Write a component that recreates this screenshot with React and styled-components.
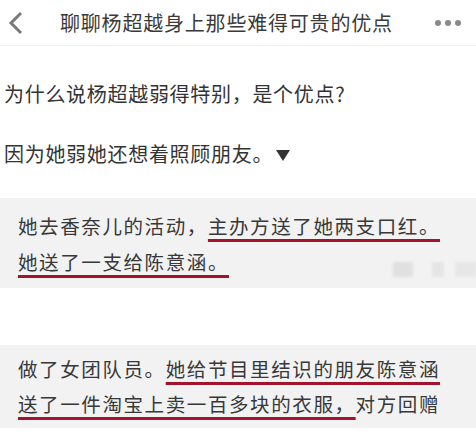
import React from "react";
import styled, { createGlobalStyle } from "styled-components";

const GlobalStyle = createGlobalStyle`
  html, body {
    margin: 0;
    padding: 0;
    background: #ffffff;
  }
  body {
    font-family: "Noto Sans CJK SC", "Noto Sans", sans-serif;
    color: #333333;
  }
`;

const Page = styled.div`
  width: 476px;
  height: 432px;
  overflow: hidden;
  background: #ffffff;
`;

const Header = styled.div`
  height: 45px;
  display: flex;
  align-items: center;
  border-bottom: 1px solid #f0f0f0;
`;

const BackButton = styled.div`
  width: 60px;
  height: 45px;
  display: flex;
  align-items: center;
  padding-left: 7px;
  box-sizing: border-box;
`;

const Title = styled.div`
  flex: 1;
  font-size: 20px;
  letter-spacing: 0.8px;
  color: #3a3a3a;
  line-height: 45px;
  white-space: nowrap;
`;

const MoreButton = styled.div`
  display: flex;
  gap: 4px;
  padding-right: 15px;
`;

const Dot = styled.span`
  width: 6px;
  height: 6px;
  border-radius: 50%;
  background: #8a8a8a;
`;

const Body = styled.div`
  padding: 33px 0 0 4px;
`;

const Para = styled.p`
  margin: 0 0 30px;
  font-size: 20px;
  letter-spacing: 0.7px;
  line-height: 30px;
  color: #333333;
  white-space: nowrap;
`;

const Arrow = styled.span`
  display: inline-block;
  margin-left: 3px;
  width: 0;
  height: 0;
  border-left: 7px solid transparent;
  border-right: 7px solid transparent;
  border-top: 11px solid #333333;
  vertical-align: 1px;
`;

const Quote = styled.div`
  position: relative;
  margin: ${(p) => p.$top}px 0 0 -4px;
  padding: ${(p) => p.$pt}px 18px ${(p) => p.$pb}px;
  background: #f2f2f2;
  font-size: 19.5px;
  letter-spacing: 1.6px;
  line-height: ${(p) => p.$lh}px;
  color: #383838;
  white-space: nowrap;
`;

const Mark = styled.span`
  text-decoration: underline;
  text-decoration-color: #a3142c;
  text-decoration-thickness: 2.5px;
  text-underline-offset: 5px;
`;

const Blur = styled.span`
  position: absolute;
  top: 64px;
  height: 15px;
  background: ${(p) => p.$c};
  filter: blur(1.5px);
`;

const BackIcon = () => (
  <svg width="18" height="24" viewBox="0 0 18 24">
    <path d="M14 2 L4 12 L14 22" fill="none" stroke="#7a7a7a" strokeWidth="3" />
  </svg>
);

export default function App() {
  return (
    <Page>
      <GlobalStyle />
      <Header>
        <BackButton>
          <BackIcon />
        </BackButton>
        <Title>聊聊杨超越身上那些难得可贵的优点</Title>
        <MoreButton>
          <Dot />
          <Dot />
          <Dot />
        </MoreButton>
      </Header>
      <Body>
        <Para>为什么说杨超越弱得特别，是个优点?</Para>
        <Para>
          因为她弱她还想着照顾朋友。
          <Arrow />
        </Para>
        <Quote $top={-1} $pt={10} $pb={8} $lh={36}>
          她去香奈儿的活动，<Mark>主办方送了她两支口红。</Mark>
          <br />
          <Mark>她送了一支给陈意涵。</Mark>
          <Blur style={{ left: 393, width: 20 }} $c="#e0e0e0" />
          <Blur style={{ left: 432, width: 12 }} $c="#e5e5e5" />
          <Blur style={{ left: 455, width: 21 }} $c="#e7e7e7" />
        </Quote>
        <Quote $top={57} $pt={6} $pb={7} $lh={35}>
          做了女团队员。<Mark>她给节目里结识的朋友陈意涵</Mark>
          <br />
          <Mark>送了一件淘宝上卖一百多块的衣服，</Mark>对方回赠
        </Quote>
      </Body>
    </Page>
  );
}
